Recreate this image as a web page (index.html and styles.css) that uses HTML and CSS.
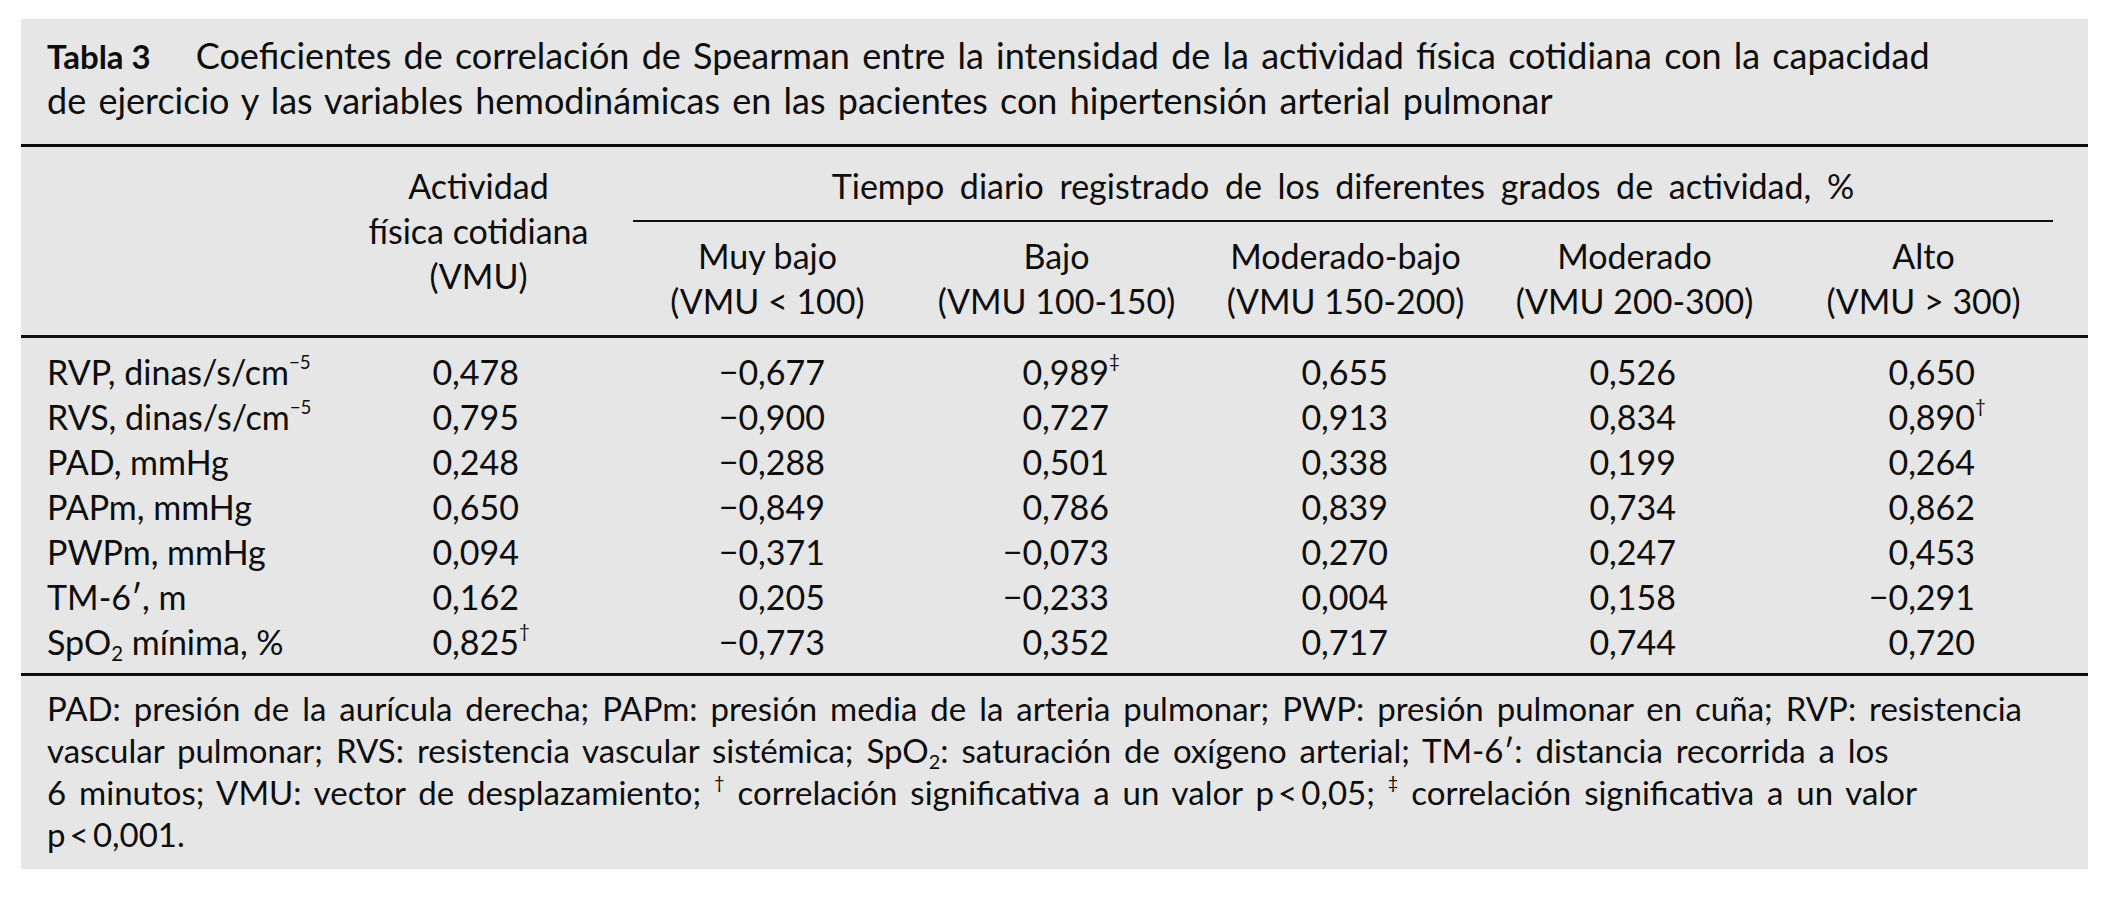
FILE: index.html
```html
<!DOCTYPE html>
<html lang="es">
<head>
<meta charset="utf-8">
<title>Tabla 3</title>
<link rel="stylesheet" href="styles.css">
</head>
<body>
<figure class="card">
  <figcaption class="caption">
    <strong class="tag">Tabla 3</strong>Coeficientes de correlación de Spearman entre la intensidad de la actividad física cotidiana con la capacidad<br>de ejercicio y las variables hemodinámicas en las pacientes con hipertensión arterial pulmonar
  </figcaption>
  <table class="data">
    <colgroup>
      <col class="c-label"><col class="c-val"><col class="c-val"><col class="c-val"><col class="c-val"><col class="c-val"><col class="c-last">
    </colgroup>
    <thead>
      <tr class="h1">
        <th class="blank" rowspan="2"></th>
        <th class="act" rowspan="2">Actividad<br>física cotidiana<br>(VMU)</th>
        <th class="group" colspan="5"><div class="group-in">Tiempo diario registrado de los diferentes grados de actividad, %</div></th>
      </tr>
      <tr class="h2">
        <th>Muy bajo<br>(VMU &lt; 100)</th>
        <th>Bajo<br>(VMU 100-150)</th>
        <th>Moderado-bajo<br>(VMU 150-200)</th>
        <th>Moderado<br>(VMU 200-300)</th>
        <th class="last">Alto<br>(VMU &gt; 300)</th>
      </tr>
    </thead>
    <tbody>
      <tr class="first"><td>RVP, dinas/s/cm<sup class="exp">−5</sup></td><td>0,478</td><td>−0,677</td><td>0,989<sup class="mk">‡</sup></td><td>0,655</td><td>0,526</td><td>0,650</td></tr>
      <tr><td>RVS, dinas/s/cm<sup class="exp">−5</sup></td><td>0,795</td><td>−0,900</td><td>0,727</td><td>0,913</td><td>0,834</td><td>0,890<sup class="mk">†</sup></td></tr>
      <tr><td>PAD, mmHg</td><td>0,248</td><td>−0,288</td><td>0,501</td><td>0,338</td><td>0,199</td><td>0,264</td></tr>
      <tr><td>PAPm, mmHg</td><td>0,650</td><td>−0,849</td><td>0,786</td><td>0,839</td><td>0,734</td><td>0,862</td></tr>
      <tr><td>PWPm, mmHg</td><td>0,094</td><td>−0,371</td><td>−0,073</td><td>0,270</td><td>0,247</td><td>0,453</td></tr>
      <tr><td>TM-6′, m</td><td>0,162</td><td>0,205</td><td>−0,233</td><td>0,004</td><td>0,158</td><td>−0,291</td></tr>
      <tr class="final"><td>SpO<sub class="ix">2</sub> mínima, %</td><td>0,825<sup class="mk">†</sup></td><td>−0,773</td><td>0,352</td><td>0,717</td><td>0,744</td><td>0,720</td></tr>
    </tbody>
  </table>
  <p class="notes">PAD: presión de la aurícula derecha; PAPm: presión media de la arteria pulmonar; PWP: presión pulmonar en cuña; RVP: resistencia<br>vascular pulmonar; RVS: resistencia vascular sistémica; SpO<sub class="ix">2</sub>: saturación de oxígeno arterial; TM-6′: distancia recorrida a los<br>6 minutos; VMU: vector de desplazamiento; <sup class="fn">†</sup> correlación significativa a un valor p&thinsp;&lt;&thinsp;0,05; <sup class="fn">‡</sup> correlación significativa a un valor<br>p&thinsp;&lt;&thinsp;0,001.</p>
</figure>
</body>
</html>
```

FILE: styles.css
```css
html, body {
  margin: 0;
  padding: 0;
  background: #ffffff;
}

body {
  font-family: "Lato", "Liberation Sans", sans-serif;
  color: #0d0d0d;
}

.card {
  margin: 19px 0 0 21px;
  width: 2067px;
  background: #e6e6e6;
  padding: 0 0 14px;
}

.caption {
  padding: 14px 26px 22px;
  font-size: 36px;
  line-height: 44px;
  word-spacing: 3px;
  border-bottom: 3px solid #0d0d0d;
}

.tag {
  font-size: 33px;
  font-weight: 700;
  word-spacing: 0;
  margin-right: 45px;
}

.data {
  width: 2067px;
  border-collapse: collapse;
  table-layout: fixed;
  font-size: 34px;
  line-height: 45px;
}

.c-label { width: 313px; }
.c-val { width: 289px; }
.c-last { width: 309px; }

.data th {
  font-weight: 400;
  text-align: center;
  padding: 0;
  vertical-align: top;
}

.data .act {
  padding-top: 16px;
}

.data .group {
  padding: 16px 35px 0 10px;
  word-spacing: 7px;
}

.group-in {
  padding-bottom: 12px;
  border-bottom: 2px solid #0d0d0d;
}

.data .h2 th {
  padding: 11px 0 12px;
  border-bottom: 3px solid #0d0d0d;
}

.data .h2 th.last {
  padding-right: 20px;
}

.data .blank,
.data .act {
  border-bottom: 3px solid #0d0d0d;
}

.data td {
  padding: 0;
  text-align: right;
  white-space: nowrap;
}

.data td:first-child {
  text-align: left;
  padding-left: 26px;
}

.data td:nth-child(2) { padding-right: 104px; }
.data td:nth-child(3) { padding-right: 87px; }
.data td:nth-child(4) { padding-right: 92px; }
.data td:nth-child(5) { padding-right: 102px; }
.data td:nth-child(6) { padding-right: 103px; }
.data td:nth-child(7) { padding-right: 113px; }

.data .first td { padding-top: 11px; }
.data .final td {
  padding-bottom: 9px;
  border-bottom: 3px solid #0d0d0d;
}

.exp {
  font-size: 0.55em;
  line-height: 0;
  vertical-align: 0.85em;
}

.mk {
  display: inline-block;
  width: 0;
  font-size: 0.55em;
  line-height: 0;
  vertical-align: 0.9em;
}

.ix {
  font-size: 0.6em;
  line-height: 0;
  vertical-align: -0.3em;
}

.fn {
  font-size: 0.55em;
  line-height: 0;
  vertical-align: 0.9em;
}

.notes {
  margin: 0;
  padding: 11px 26px 0;
  font-size: 33px;
  line-height: 42px;
  word-spacing: 4.5px;
}
```
